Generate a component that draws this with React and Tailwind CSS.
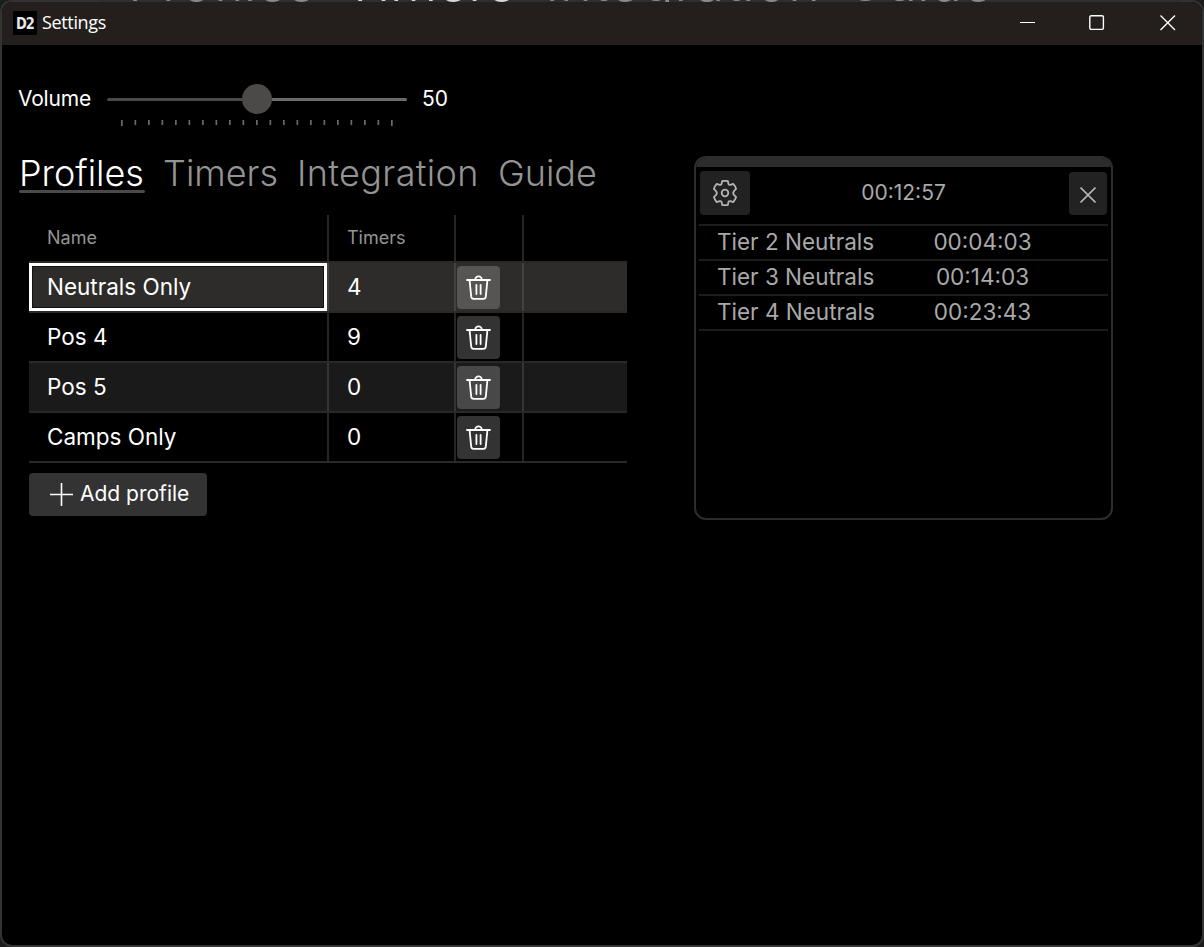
import React from "react";

const profiles = [
  { name: "Neutrals Only", timers: 4, selected: true },
  { name: "Pos 4", timers: 9 },
  { name: "Pos 5", timers: 0, striped: true },
  { name: "Camps Only", timers: 0 },
];

const upcoming = [
  ["Tier 2 Neutrals", "00:04:03"],
  ["Tier 3 Neutrals", "00:14:03"],
  ["Tier 4 Neutrals", "00:23:43"],
];

function TrashIcon() {
  return (
    <svg className="h-[25px] w-[25px]" viewBox="0 0 25 25" fill="none" stroke="white" strokeWidth="1.8" strokeLinecap="round" strokeLinejoin="round">
      <path d="M1 5H24" />
      <path d="M9.2 4.6a3.3 3.3 0 0 1 6.6 0" />
      <path d="M3.6 5.4 5.2 21.7a2.4 2.4 0 0 0 2.4 2.1h9.8a2.4 2.4 0 0 0 2.4-2.1L21.4 5.4" />
      <path d="M10.4 10v9M14.6 10v9" />
    </svg>
  );
}

function GearIcon() {
  return (
    <svg className="h-[26px] w-[26px]" viewBox="0 0 26 26" fill="none" stroke="#b4b4b4" strokeWidth="1.8" strokeLinejoin="round">
      <path d="M10.1 1.2Q13 .5 15.9 1.2L16.4 3.8Q16.8 5.3 18.4 4.8L21.2 3.9Q23.3 6 24.1 8.9L22.2 10.8Q20.2 13 22.2 15.2L24.1 17.1Q23.3 20 21.2 22.1L18.4 21.2Q16.8 20.7 16.4 22.2L15.9 24.8Q13 25.5 10.1 24.8L9.6 22.2Q9.2 20.7 7.6 21.2L4.8 22.1Q2.7 20 1.9 17.1L3.8 15.2Q5.8 13 3.8 10.8L1.9 8.9Q2.7 6 4.8 3.9L7.6 4.8Q9.2 5.3 9.6 3.8Z" />
      <circle cx="13" cy="13" r="3.3" />
    </svg>
  );
}

function TitleBar() {
  return (
    <header className="flex h-[43px] shrink-0 items-center bg-[#241f1d] pl-[11px]">
      <div className="mb-[1px] flex h-6 w-6 items-center justify-center bg-black">
        <span className="scale-y-115 font-['DejaVu_Sans'] text-[13px] leading-none font-bold tracking-[-1px] text-[#e8e8e8]">D2</span>
      </div>
      <span className="mb-[2px] ml-[5px] font-['Open_Sans','Noto_Sans',sans-serif] text-[18px] tracking-[-0.35px] text-white">Settings</span>
      <div className="ml-auto mb-[1px] flex items-center pr-[26px] text-white">
        <svg className="h-4 w-4" viewBox="0 0 16 16" stroke="currentColor"><path d="M0 7.5H15" /></svg>
        <svg className="ml-[53px] h-4 w-4" viewBox="0 0 16 16" fill="none" stroke="currentColor" strokeWidth="1.4"><rect x=".8" y=".8" width="13.6" height="13.6" rx="1.3" /></svg>
        <svg className="ml-[55px] h-4 w-4" viewBox="0 0 16 16" stroke="currentColor" strokeWidth="1.4"><path d="M.5 .5 15 15M15 .5 .5 15" /></svg>
      </div>
    </header>
  );
}

function Volume() {
  return (
    <div className="flex h-[55px] items-start pl-4 text-[21px] leading-[30px] text-white">
      <span className="w-[89px] tracking-[-0.2px]">Volume</span>
      <div className="w-[300px]">
        <div className="flex h-[30px] items-center">
          <div className="h-[3px] w-[135px] rounded-l-sm bg-[#4b4a49]" />
          <div className="h-[30px] w-[30px] rounded-full bg-[#4b4a48]" />
          <div className="h-[3px] w-[135px] rounded-r-sm bg-[#6b6b6b]" />
        </div>
        <svg className="mt-[6px] block h-[6px] w-[300px]" viewBox="0 0 300 6">
          {Array.from({ length: 21 }, (_, i) => (
            <rect key={i} x={14 + i * 13.5} y="0" width="1.7" height={i % 20 === 0 ? 6 : 5} fill="#6a6a6a" />
          ))}
        </svg>
      </div>
      <span className="ml-[15px]">50</span>
    </div>
  );
}

function Tabs() {
  return (
    <nav className="flex h-[56px] pl-[17px] text-[36px] leading-[42px] font-light text-[#949494]">
      <div className="mr-[18px] flex h-[44px] w-[126px] flex-col">
        <span className="h-[38px] text-white">Profiles</span>
        <span className="h-[3px] w-[126px] rounded-full bg-[#4b4a49]" />
      </div>
      <span className="w-[134px]">Timers</span>
      <span className="w-[201px] tracking-[0.35px]">Integration</span>
      <span>Guide</span>
    </nav>
  );
}

function ProfileRow({ row }) {
  const bg = row.selected ? "bg-[#2d2c2b]" : row.striped ? "bg-[#1a1a1a]" : "bg-black";
  const line = row.selected ? "border-[#424140]" : row.striped ? "border-[#343434]" : "border-[#262626]";
  const button = row.selected ? "bg-[#565554]" : row.striped ? "bg-[#484848]" : "bg-[#333333]";
  return (
    <div className={`flex h-[50px] border-b-2 border-[#292929] ${bg}`}>
      <div className={`w-[300px] border-r-2 ${line}`}>
        <div className={`flex h-[48px] items-center ${row.selected ? "border-[3px] border-white pl-[15px] shadow-[inset_0_0_0_1px_#121110]" : "pl-[18px]"}`}>{row.name}</div>
      </div>
      <div className={`flex w-[127px] items-center border-r-2 pl-[18px] ${line}`}>{row.timers}</div>
      <div className={`w-[68px] border-r-2 pt-[3px] pl-[1px] ${line}`}>
        <button className={`flex h-[43px] w-[43px] items-center justify-center rounded ${button}`}><TrashIcon /></button>
      </div>
    </div>
  );
}

function ProfileTable() {
  return (
    <section className="ml-[27px] w-[598px]">
      <div className="flex h-[46px] text-[18px] text-[#949494]">
        <div className="flex w-[300px] items-center border-r-2 border-[#262626] pb-[2px] pl-[18px]">Name</div>
        <div className="flex w-[127px] items-center border-r-2 border-[#262626] pb-[2px] pl-[18px]">Timers</div>
        <div className="w-[68px] border-r-2 border-[#262626]" />
      </div>
      <div className="border-t-2 border-[#292929] text-[22.5px] text-white">
        {profiles.map((row) => <ProfileRow key={row.name} row={row} />)}
      </div>
      <button className="mt-[10px] flex h-[43px] w-[178px] items-center rounded bg-[#333333] pl-[21px] text-[21px] text-white">
        <svg className="mb-[1px] h-[23px] w-[23px]" viewBox="0 0 23 23" stroke="white" strokeWidth="1.6"><path d="M0 11.5H23M11.5 0V23" /></svg>
        <span className="mb-[2px] ml-[7px]">Add profile</span>
      </button>
    </section>
  );
}

function Overlay() {
  return (
    <aside className="mt-[111px] ml-[67px] flex h-[364px] w-[419px] flex-col overflow-hidden rounded-xl border-2 border-[#2d2d2d] bg-black text-[#a9a9a9]">
      <div className="h-[9px] shrink-0 bg-[#2d2d2d]" />
      <div className="mx-[3px] flex h-[57px] shrink-0 items-start justify-between pt-[4px] pr-[1px] pl-[1px]">
        <button className="flex h-[44px] w-[50px] items-center justify-center rounded bg-[#222222]"><GearIcon /></button>
        <span className="ml-[-12px] text-[21px] leading-[43px]">00:12:57</span>
        <button className="mt-[1px] flex h-[43px] w-[38px] items-center justify-center rounded bg-[#222222]">
          <svg className="mt-[2px] h-4 w-4" viewBox="0 0 16 16" stroke="#b4b4b4" strokeWidth="1.6"><path d="M.5 .5 15.5 15.5M15.5 .5 .5 15.5" /></svg>
        </button>
      </div>
      <div className="mx-[3px] border-t-2 border-[#1d1d1d] text-[22.5px] leading-[31px]">
        {upcoming.map(([name, time]) => (
          <div key={name} className="flex h-[35px] border-b-2 border-[#1d1d1d] pl-[18px]">
            <span className="w-[189px]">{name}</span>
            <span className="w-[153px] text-center">{time}</span>
          </div>
        ))}
      </div>
    </aside>
  );
}

/* Sliver of the window behind, visible along the top edge */
function BackgroundSliver() {
  return (
    <div className="absolute top-0 left-[100px] h-[2px] w-[1080px] overflow-hidden bg-[#2f2f2f] pl-[28px]" aria-hidden="true">
      <div className="mt-[-45px] flex text-[54px] leading-[54px] font-light text-[#8a8a8a]">
        <span className="w-[215px]">Profiles</span>
        <span className="w-[202px] text-[#d8d8d8]">Timers</span>
        <span className="w-[300px] tracking-[0.8px]">Integration</span>
        <span>Guide</span>
      </div>
    </div>
  );
}

export default function App() {
  return (
    <div className="relative h-[947px] w-[1204px] overflow-hidden bg-[#1c1c1c] font-['Inter',sans-serif]">
      <div className="flex h-[947px] w-[1204px] flex-col overflow-hidden rounded-[12px] border-2 border-[#333333] bg-black">
        <TitleBar />
        <main className="flex">
          <div className="w-[625px] shrink-0 pt-[39px]">
            <Volume />
            <div className="mt-[13px]"><Tabs /></div>
            <div className="mt-[7px]"><ProfileTable /></div>
          </div>
          <Overlay />
        </main>
      </div>
      <BackgroundSliver />
    </div>
  );
}
